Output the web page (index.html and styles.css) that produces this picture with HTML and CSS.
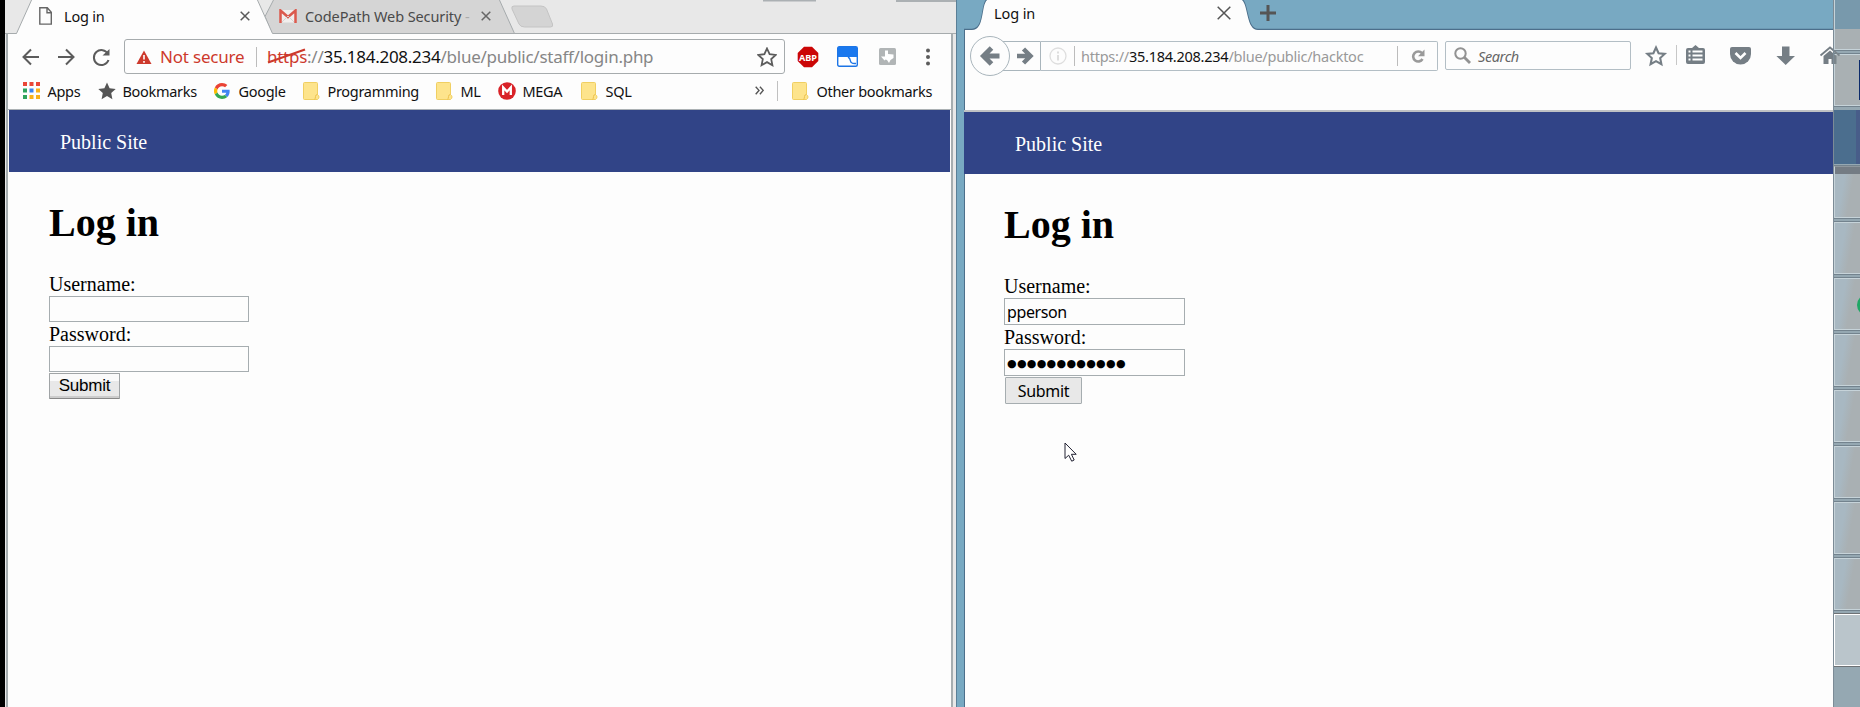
FILE: index.html
```html
<!DOCTYPE html>
<html lang="en">
<head>
<meta charset="utf-8">
<title>Log in</title>
<link rel="stylesheet" href="styles.css">
</head>
<body>
<svg class="defs" width="0" height="0">
  <defs>
    <g id="folder"><path d="M.5 1.5q0-1 1-1h12q1 0 1 1v11q1.500 1 1.500 2.500t-1.500 2.500h-13q-1 0-1-1z" fill="#fde48c" stroke="#f0cf62"/><path d="M14.500 12.500q-2 0-2 2t-1 3" fill="none" stroke="#eec24c"/></g>
    <path id="star" d="M10 1.500l2.600 5.700 6.100.7-4.500 4.200 1.200 6.100-5.400-3.100-5.400 3.100 1.200-6.100L1.300 7.900l6.100-.7z"/>
  </defs>
</svg>
<div class="desktop">
  <div class="edge"></div>

  <section class="chrome">
    <div class="chrome-tabs">
      <svg class="tab-shapes" width="951" height="34" viewBox="5 0 951 34">
        <path d="M763 .5h53M896 1h60" stroke="#abb0b3" stroke-width="2"/>
        <path d="M5 33.500H956" stroke="#a6abad"/>
        <path d="M274-1h225l15.500 34.500H272l-7-17z" fill="#d5d5d5" stroke="#a6abad"/>
        <path d="M512 9q-1-3 2-3h27q4 0 5.500 3l6 15q1 3-2 3h-26q-4 0-5.500-3z" fill="#d4d4d4" stroke="#c4c4c4"/>
        <path d="M6 35v-1.500h10.500L32-1H257l15.500 34.500V35z" fill="#fdfdfd"/>
        <path d="M6 33.500h10.500L32-1M257-1l15.500 34.500" fill="none" stroke="#a6abad"/>
      </svg>
      <div class="tab tab-one">
        <svg width="13" height="18" viewBox="0 0 13 18"><path d="M.8.8h7.500l4 4.500v11.800H.8zM8 .8v5h4.500" fill="none" stroke="#666" stroke-width="1.400"/></svg>
        <span class="tab-name">Log in</span>
        <svg width="10" height="10" viewBox="0 0 10 10"><path d="M.7.7l8.600 8.600M9.300.7L.7 9.300" stroke="#5a5a5a" stroke-width="1.500"/></svg>
      </div>
      <div class="tab tab-two">
        <svg width="18" height="14" viewBox="0 0 18 14"><path d="M1 1h16v12.500H1z" fill="#f1eeed"/><path d="M1.500 14V1.500L9 8l7.500-6.500V14" fill="none" stroke="#db5a4e" stroke-width="2.500"/><path d="M3 13l6-6 6 6" fill="none" stroke="#d5d3d3"/></svg>
        <span class="tab-name">CodePath Web Security <i>-</i></span>
        <svg width="10" height="10" viewBox="0 0 10 10"><path d="M.7.7l8.600 8.600M9.300.7L.7 9.300" stroke="#666" stroke-width="1.500"/></svg>
      </div>
    </div>

    <div class="chrome-body">
      <div class="chrome-bar">
        <svg width="90" height="24" viewBox="0 0 90 24" fill="none" stroke="#5c5c5c" stroke-width="2"><path d="M17 12H2M9 4.500L1.500 12 9 19.500M36 12h15M44 4.500l7.500 7.500-7.500 7.500M86 9A7.500 7.500 0 1 0 86.500 15"/><path d="M87.500 4v6.500h-7z" fill="#5c5c5c" stroke="none"/></svg>
        <div class="omnibox">
          <svg class="warn" width="16" height="14" viewBox="0 0 16 14"><path d="M8 .5L15.500 14H.5z" fill="#cd392c"/><path d="M8 5v4.500M8 11v1.800" stroke="#fff" stroke-width="1.600"/></svg>
          <span class="unsafe">Not secure</span>
          <span class="split"></span>
          <span class="url"><span class="scheme">https<svg class="strike" width="40" height="16" viewBox="0 0 40 16"><path d="M1 14.500L38 1.500" stroke="#cd392c" stroke-width="2.200"/></svg></span>://<b>35.184.208.234</b>/blue/public/staff/login.php</span>
          <svg class="fav" width="20" height="20" viewBox="0 0 20 20"><use href="#star" fill="none" stroke="#5c5c5c" stroke-width="1.800"/></svg>
        </div>
        <div class="extensions">
          <svg width="22" height="22" viewBox="0 0 22 22"><path d="M7 .7h8l6.300 6.300v8L15 21.300H7L.7 15V7z" fill="#cb0606"/><text x="11" y="14.600" text-anchor="middle" font-size="9.500" font-weight="700" fill="#fff" textLength="18" lengthAdjust="spacingAndGlyphs">ABP</text></svg>
          <svg width="21" height="21" viewBox="0 0 21 21"><rect x=".7" y=".7" width="19.600" height="19.600" rx="1.500" fill="#fff" stroke="#1d75e6" stroke-width="1.400"/><path d="M1 1h19v10H1z" fill="#1a78ee"/><path d="M11 11q2 1 2.500 4t5.500 2.500" fill="none" stroke="#1d75e6" stroke-width="1.400"/></svg>
          <svg width="17" height="17" viewBox="0 0 17 17"><rect width="17" height="17" rx="1.500" fill="#b1b5b6"/><path d="M6 2.500h3v3.500l5.500.5v3.500l-3 2-1.500 3-2-3-1.500-.5-1 1-3.500-4h4z" fill="#fff"/></svg>
          <svg width="4" height="18" viewBox="0 0 4 18" fill="#5c5c5c"><circle cx="2" cy="2.500" r="2"/><circle cx="2" cy="9" r="2"/><circle cx="2" cy="15.500" r="2"/></svg>
        </div>
      </div>

      <div class="bookmarks">
        <div class="mark w-apps"><svg width="17" height="17" viewBox="0 0 17 17"><path d="M0 0h4v4H0zM6.500 0h4v4h-4zM13 0h4v4h-4z" fill="#ea4637"/><path d="M0 6.500h4v4H0zM0 13h4v4H0z" fill="#2ea35c"/><path d="M6.500 6.500h4v4h-4z" fill="#3d84ee"/><path d="M13 6.500h4v4h-4zM6.500 13h4v4h-4zM13 13h4v4h-4z" fill="#f9b218"/></svg><span>Apps</span></div>
        <div class="mark w-marks"><svg width="18" height="18" viewBox="1 1 18 18"><use href="#star" fill="#555"/></svg><span>Bookmarks</span></div>
        <div class="mark w-google"><svg width="16" height="16" viewBox="0 0 48 48"><path fill="#ea4335" d="M24 9.500c3.500 0 6.700 1.200 9.200 3.600l6.900-6.900C35.900 2.400 30.500 0 24 0 14.600 0 6.500 5.400 2.600 13.200l8 6.200C12.400 13.700 17.700 9.500 24 9.500z"/><path fill="#4285f4" d="M47 24.600c0-1.600-.2-3.100-.4-4.600H24v9h12.900c-.6 3-2.200 5.500-4.700 7.200l7.700 6C44.400 38 47 32 47 24.600z"/><path fill="#fbbc05" d="M10.500 28.600a14.500 14.500 0 0 1 0-9.200l-8-6.200a24 24 0 0 0 0 21.600z"/><path fill="#34a853" d="M24 48c6.500 0 11.900-2.100 15.900-5.800l-7.700-6c-2.200 1.500-4.900 2.300-8.200 2.300-6.300 0-11.600-4.200-13.500-9.900l-8 6.200C6.500 42.600 14.600 48 24 48z"/></svg><span>Google</span></div>
        <div class="mark w-prog"><svg width="17" height="18"><use href="#folder"/></svg><span>Programming</span></div>
        <div class="mark w-ml"><svg width="17" height="18"><use href="#folder"/></svg><span>ML</span></div>
        <div class="mark w-mega"><svg width="18" height="18" viewBox="0 0 18 18"><circle cx="9" cy="9" r="8.800" fill="#d92228"/><path d="M5.200 13V5.500L9 9.500l3.800-4V13" fill="none" stroke="#fff" stroke-width="2.300"/></svg><span>MEGA</span></div>
        <div class="mark w-sql"><svg width="17" height="18"><use href="#folder"/></svg><span>SQL</span></div>
        <svg class="more" width="9" height="9" viewBox="0 0 9 9"><path d="M.7.7l3.300 3.700L.7 8.200M4.900.7l3.300 3.700-3.300 3.800" fill="none" stroke="#555" stroke-width="1.400"/></svg>
        <div class="mark other"><svg width="17" height="18"><use href="#folder"/></svg><span>Other bookmarks</span></div>
      </div>

      <main class="page">
        <nav>Public Site</nav>
        <form>
          <h1>Log in</h1>
          <label>Username:</label>
          <div class="field"></div>
          <label>Password:</label>
          <div class="field"></div>
          <div class="submit">Submit</div>
        </form>
      </main>
    </div>
  </section>

  <section class="firefox">
    <div class="fox-tabs">
      <svg class="tab-shapes" width="869" height="30" viewBox="964 0 869 30"><path d="M964 29.500h8c14 0 8-29 17-31H1240c9 2 5 31 18 31h575" fill="none" stroke="#4c6f8b" stroke-width="1.500"/><path d="M964 30h8c14 0 8-29 17-31H1240c9 2 5 31 18 31z" fill="#fdfdfd"/></svg>
      <span class="fox-name">Log in</span>
      <svg class="fox-close" width="14" height="14" viewBox="0 0 14 14"><path d="M.7.7l12.600 12.600M13.300.7L.7 13.300" stroke="#555" stroke-width="1.500"/></svg>
      <svg class="fox-plus" width="16" height="16" viewBox="0 0 16 16"><path d="M8 0v16M0 8h16" stroke="#555" stroke-width="3"/></svg>
    </div>
    <div class="fox-bar">
      <svg class="nav-buttons" width="72" height="42" viewBox="0 0 72 42"><path d="M28 6.500h43.500v29H28" fill="none" stroke="#a9b5bc"/><circle cx="21" cy="21" r="19.500" fill="#fdfdfd" stroke="#a9b5bc"/><path d="M30.500 21H15M22.500 13L14.500 21l8 8" fill="none" stroke="#757e85" stroke-width="5"/><path d="M48 21h13M54.500 14l7 7-7 7" fill="none" stroke="#757e85" stroke-width="4.500"/></svg>
      <div class="fox-url">
        <svg width="18" height="18" viewBox="0 0 18 18" fill="none" stroke="#dedede"><circle cx="9" cy="9" r="8" stroke-width="1.300"/><path d="M9 8v5.500M9 4.500v2" stroke-width="2"/></svg>
        <span class="split"></span>
        <span class="address">https://<b>35.184.208.234</b>/blue/public/hacktoc</span>
        <span class="split"></span>
        <svg width="14" height="14" viewBox="0 0 14 14"><path d="M11 4.200A5 5 0 1 0 11.500 10" fill="none" stroke="#9a9a9a" stroke-width="2.600"/><path d="M13.500.5v6.700H7z" fill="#9a9a9a"/></svg>
      </div>
      <div class="fox-search">
        <svg width="17" height="17" viewBox="0 0 17 17" fill="none" stroke="#929292"><circle cx="6.500" cy="6.500" r="5.200" stroke-width="2"/><path d="M10.500 10.500l5.500 5.500" stroke-width="2.800"/></svg>
        <span>Search</span>
      </div>
      <svg class="fox-tools" width="193" height="24" viewBox="1640 44 193 24" fill="#757e85">
        <g transform="translate(1646 46)"><use href="#star" fill="none" stroke="#757e85" stroke-width="2.100"/></g>
        <path d="M1676.500 45v20" stroke="#c7c7c7"/>
        <path d="M1692 48l3.500-3 3.500 3h4q2 0 2 2v12q0 2-2 2h-15q-2 0-2-2V50q0-2 2-2z"/><path d="M1692.500 51.500h10M1692.500 55.500h10M1692.500 59.500h10" stroke="#fff" stroke-width="2"/><path d="M1688.500 51.500h2M1688.500 55.500h2M1688.500 59.500h2" stroke="#fff" stroke-width="2"/>
        <path d="M1732 47h17q2 0 2 2v5a10.500 10.500 0 0 1-21 0v-5q0-2 2-2z"/><path d="M1735.500 53l5 5 5-5" fill="none" stroke="#fff" stroke-width="2.600"/>
        <path d="M1782 46.500h7.500V56h5.500l-9.300 9-9.300-9h5.600z"/>
        <path d="M1820.500 55.500l9.500-8 9.500 8" fill="none" stroke="#757e85" stroke-width="1.800"/><path d="M1823.500 56l6.500-5.500 6.500 5.500v8h-5v-5h-3v5h-5z"/>
      </svg>
    </div>
    <main class="page">
      <nav>Public Site</nav>
      <form>
        <h1>Log in</h1>
        <label>Username:</label>
        <div class="field">pperson</div>
        <label>Password:</label>
        <div class="field dots">●●●●●●●●●●●●</div>
        <div class="submit">Submit</div>
      </form>
    </main>
  </section>

  <aside class="dock">
    <svg class="dock-home" width="6" height="20" viewBox="1834 46 6 20"><path d="M1820.500 55.500l9.500-8 9.500 8" fill="none" stroke="#7b858b" stroke-width="1.800"/><path d="M1832 52.500l4.500 3.500v8h-5z" fill="#7b858b"/></svg>
    <div class="tile top"></div>
    <div class="tile pale"><span class="slot"></span></div>
    <div class="tile blue"></div>
    <div class="tile shade"></div>
    <div class="tile"></div>
    <div class="tile"><span class="orb"></span></div>
    <div class="tile"></div>
    <div class="tile"></div>
    <div class="tile"></div>
    <div class="tile"></div>
    <div class="tile"></div>
    <div class="tile lit"></div>
  </aside>
</div>
<svg class="pointer" width="14" height="21" viewBox="0 0 14 21"><path d="M1 1v15.500l3.700-3.300 3 6 2.500-1.200-2.800-5.700h4.800z" fill="#fff" stroke="#223" stroke-width="1"/></svg>
</body>
</html>
```
FILE: styles.css
```css
* { box-sizing: border-box; }
body { margin: 0; width: 1860px; height: 707px; overflow: hidden; background: #fdfdfd; font-family: "Noto Sans", "Open Sans", sans-serif; color: #111; }
svg { display: block; flex: none; }
b, i { font-weight: inherit; font-style: inherit; }
.defs { position: absolute; }
.desktop { display: flex; height: 707px; }
.edge { width: 5px; background: #000; }

/* left browser */
.chrome { width: 952px; background: #e8e8e8; border-right: 1px solid #5a7f97; }
.chrome-tabs { position: relative; height: 34px; display: flex; }
.tab-shapes { position: absolute; left: 0; top: 0; }
.tab { position: relative; display: flex; align-items: center; height: 32px; font-size: 14.5px; white-space: nowrap; }
.tab-one { margin-left: 34px; width: 211px; }
.tab-one .tab-name { margin-left: 12px; width: 176px; letter-spacing: -.2px; }
.tab-two { margin-left: 29px; color: #4a4a4a; }
.tab-two .tab-name { margin-left: 8px; width: 176px; letter-spacing: -.1px; }
.tab-two i { color: #aaa; }
.chrome-body { height: 673px; margin: 0 3px 0 1px; background: #fdfdfd; border: solid #a6adb0; border-width: 0 2px; }
.chrome-bar { display: flex; align-items: center; height: 44px; padding-top: 1px; }
.chrome-bar > svg { margin-left: 14px; }
.omnibox { display: flex; align-items: center; width: 661px; height: 35px; margin: 0 0 0 12px; padding: 0 7px 0 11px; border: 1px solid #a6abad; border-radius: 3px; font-size: 17px; white-space: nowrap; }
.unsafe { flex: none; width: 104px; padding-left: 8px; color: #cd392c; letter-spacing: -.2px; }
.split { width: 1px; height: 20px; background: #bcbcbc; flex: none; }
.url { flex: 1; margin-left: 10px; color: #868686; letter-spacing: -.26px; }
.url b { color: #111; }
.scheme { position: relative; color: #cd392c; }
.strike { position: absolute; left: 0; top: 3px; }
.extensions { display: flex; align-items: center; padding-left: 12px; }
.extensions svg:nth-child(2) { margin-left: 18px; }
.extensions svg:nth-child(3) { margin-left: 21px; }
.extensions svg:nth-child(4) { margin-left: 30px; }
.bookmarks { display: flex; align-items: center; height: 32px; padding: 0 0 6px 15px; border-bottom: 1px solid #abb1b4; font-size: 14.5px; letter-spacing: -.3px; white-space: nowrap; }
.mark { display: grid; grid-template-columns: 24.5px 1fr; align-items: center; flex: none; }
.w-apps { width: 75px; }
.w-marks { width: 116px; }
.w-google { width: 89px; }
.w-prog { width: 133px; }
.w-ml { width: 62px; }
.w-mega { width: 83px; }
.w-sql { width: 174px; }
.more { margin-right: 13px; }
.other { height: 20px; border-left: 1px solid #c0c0c0; padding-left: 14px; }

/* shared page */
.page { font-family: "Liberation Serif", serif; font-size: 20px; color: #000; }
.page nav { height: 62px; padding: 2px 0 0 51px; line-height: 61px; background: #314487; color: #fff; }
.page form { padding: 28px 0 0 40px; }
.page h1 { margin: 0 0 26px; font-size: 40px; line-height: 46px; }
.page label { display: block; height: 24px; line-height: 25px; }
.chrome .page { margin: 0 1px; }
.field { width: 200px; height: 26px; border: 1px solid #a6adb0; }
.submit { width: 71px; height: 26px; margin-top: 1px; border: 1px solid #a0a4a6; border-bottom-color: #888; border-radius: 1px; background: linear-gradient(#fafafa 0 28%, #e8e8e8 28% 92%, #ccc 92%); font: 17px/23px "Liberation Sans", sans-serif; text-align: center; letter-spacing: -.2px; }

/* right browser */
.firefox { width: 876px; background: #fdfdfd; border-left: 7px solid #78a9c2; box-shadow: inset 1px 0 #4c6f8b; }
.fox-tabs { position: relative; display: flex; height: 30px; background: #78a9c2; }
.fox-name { position: relative; margin-left: 30px; width: 223px; font-size: 14.5px; line-height: 27px; letter-spacing: -.1px; }
.fox-close { position: relative; margin-top: 6px; }
.fox-plus { position: relative; margin: 5px 0 0 29px; }
.fox-bar { display: flex; align-items: center; height: 82px; padding-bottom: 29px; border-bottom: 2px solid #bfc1c4; }
.nav-buttons { margin-left: 5px; }
.fox-url { display: flex; align-items: center; flex: none; width: 397px; height: 30px; padding-left: 8px; border: 1px solid #b3bec5; border-left: 0; border-radius: 0 2px 2px 0; font-size: 14.5px; color: #999; white-space: nowrap; }
.fox-url .split { margin-left: 7px; }
.address { flex: none; width: 322px; padding-left: 6px; letter-spacing: -.25px; }
.address b { color: #111; }
.fox-url .address + .split { margin: 0 13px 0 0; }
.fox-search { display: flex; align-items: center; flex: none; width: 186px; height: 29px; margin: 0 9px 0 7px; padding-left: 8px; border: 1px solid #b3bec5; border-radius: 2px; font-size: 14.5px; font-style: italic; color: #666; }
.fox-search span { margin-left: 7px; letter-spacing: -.4px; }
.firefox .field { width: 181px; height: 27px; padding-left: 2px; font: 16px/27px "Noto Sans", sans-serif; letter-spacing: -.4px; }
.firefox .field.dots { font: 11px/27px "DejaVu Sans", sans-serif; letter-spacing: .3px; }
.firefox .submit { width: 77px; height: 27px; margin-left: 1px; background: #e8e8e8; border: 1px solid #a6adb0; font: 16px/26px "Noto Sans", sans-serif; letter-spacing: -.3px; }

/* dock */
.dock { position: relative; display: flex; flex-direction: column; gap: 4px; width: 27px; background: #95a8b2; border-left: 1px solid #7c8b96; overflow: hidden; }
.tile { position: relative; flex: none; height: 52px; border: solid #c6d3d9; border-width: 1px 0 1px 1px; background: linear-gradient(100deg, #a8b8c2 11px, #a9b0b3 20px); box-shadow: 0 0 0 1px #73838e; }
.tile.top { height: 50px; border-top: 0; background: linear-gradient(#7899ac 29px, #a9b0b3 29px); }
.tile.pale { background: #a9b0b3; }
.slot { position: absolute; right: 0; top: 5px; width: 1px; height: 40px; background: #0b2a6b; }
.tile.blue { border: 0; background: linear-gradient(90deg, #4b6e8e 22px, #485d89 22px); box-shadow: none; height: 54px; }
.tile.shade { margin-top: -2px; border-top-color: #8e979d; }
.tile.shade::before { content: ""; display: block; height: 7px; background: #747c84; }
.orb { position: absolute; left: 22px; top: 15px; width: 22px; height: 22px; border-radius: 50%; background: #1fa765; }
.tile.lit { border-color: #fff; background: #bac5cb; box-shadow: 0 0 0 1px #6e7275; }
.dock-home { position: absolute; left: 0; top: 46px; z-index: 1; }

.pointer { position: absolute; left: 1064px; top: 442px; }
```
